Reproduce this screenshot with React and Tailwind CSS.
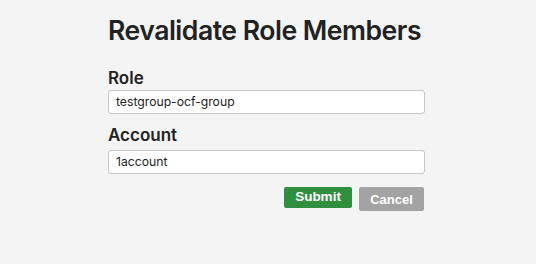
export default function App() {
  return (
    <div className="w-[536px] h-[264px] bg-[#f4f4f4] overflow-hidden" style={{ fontFamily: 'Inter, "Noto Sans", sans-serif' }}>
      <div className="ml-[108px] w-[317px] pt-[13px]">
        <h1 className="text-[26.6px] leading-[34px] font-semibold text-[#222] tracking-[-0.5px] whitespace-nowrap">Revalidate Role Members</h1>
        <div className="mt-[20px] text-[17px] leading-[22px] font-semibold text-[#222]">Role</div>
        <div className="mt-[1px] h-[24px] bg-white border border-[#c8c8c8] rounded-[3px] flex items-center px-[7px] text-[12.2px] text-[#222]">testgroup-ocf-group</div>
        <div className="mt-[10px] text-[17px] leading-[22px] font-semibold text-[#222]">Account</div>
        <div className="mt-[4px] h-[24px] bg-white border border-[#c8c8c8] rounded-[3px] flex items-center px-[7px] text-[12.2px] text-[#222]">1account</div>
        <div className="mt-[13px] flex justify-end items-start gap-[7px] pr-[1px]" style={{ fontFamily: '"Liberation Sans", Arial, sans-serif' }}>
          <button className="w-[68px] h-[21px] bg-[#2f8f3f] text-white text-[13.5px] font-bold rounded-[2px] flex items-center justify-center">Submit</button>
          <button className="w-[65px] h-[24px] bg-[#a3a3a3] text-white text-[13px] font-bold rounded-[2px] flex items-center justify-center pt-[2px]">Cancel</button>
        </div>
      </div>
    </div>
  );
}
